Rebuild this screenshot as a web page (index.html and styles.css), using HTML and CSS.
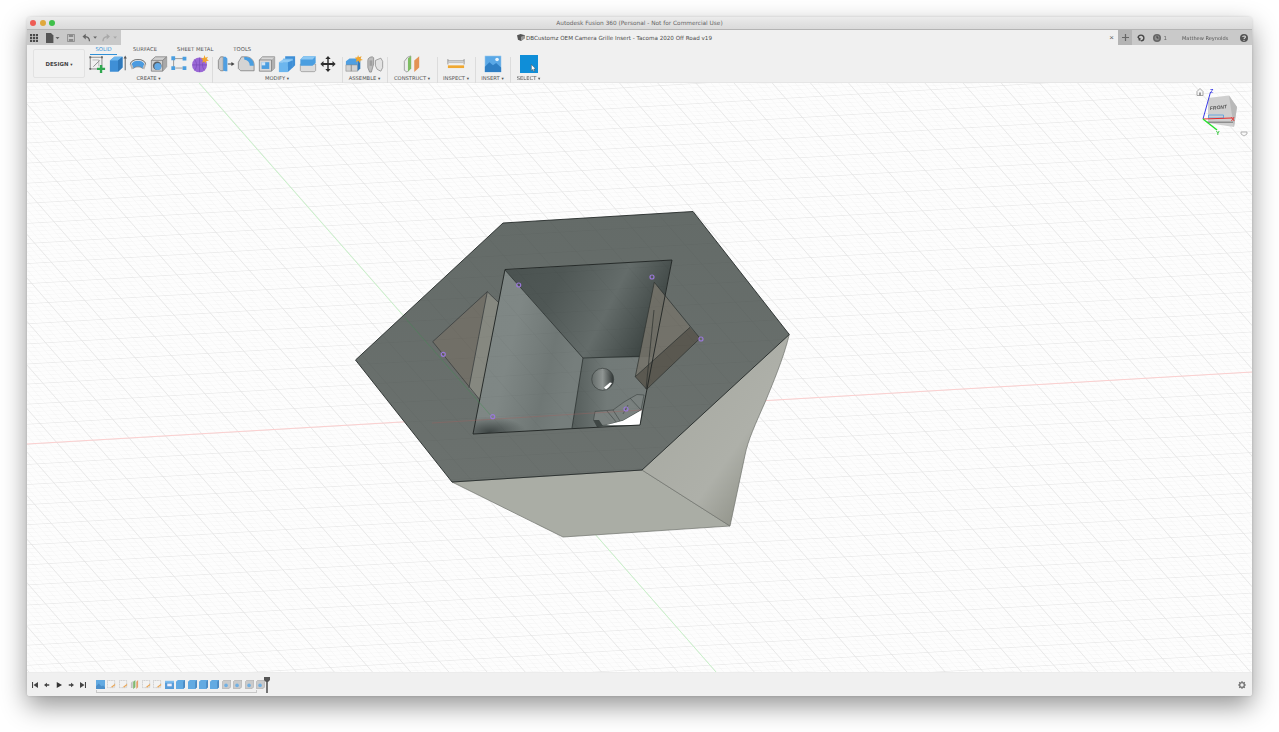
FILE: index.html
```html
<!DOCTYPE html>
<html lang="en">
<head>
<meta charset="utf-8">
<title>Autodesk Fusion 360</title>
<link rel="stylesheet" href="styles.css">
</head>
<body>
<main class="window">
  <header class="titlebar">
    <div class="lights"><i class="light red"></i><i class="light yellow"></i><i class="light green"></i></div>
    <div class="title">Autodesk Fusion 360 (Personal - Not for Commercial Use)</div>
  </header>
  <div class="tabbar">
    <div class="appbar">
      <svg class="ico grid9" viewBox="0 0 9 9"><path fill="#4a4a4a" d="M0 0h2.4v2.4H0zM3.3 0h2.4v2.4H3.3zM6.6 0H9v2.4H6.6zM0 3.3h2.4v2.4H0zM3.3 3.3h2.4v2.4H3.3zM6.6 3.3H9v2.4H6.6zM0 6.6h2.4V9H0zM3.3 6.6h2.4V9H3.3zM6.6 6.6H9V9H6.6z"/></svg>
      <svg class="ico file" viewBox="0 0 14 10"><path fill="#555" d="M0 0h5l2.4 2.4V10H0z"/><path fill="#666" d="M9.5 4h4l-2 2.2z"/></svg>
      <svg class="ico save" viewBox="0 0 9 9"><path fill="none" stroke="#8a8a8a" d="M.5.5h8v8h-8z"/><path fill="#8a8a8a" d="M2 .5h5v3H2zM2 5.5h5v3H2z"/></svg>
      <svg class="ico undo" viewBox="0 0 16 9"><path fill="none" stroke="#666" stroke-width="1.4" d="M8 8.4C8 5 6 3.5 2.5 3.5"/><path fill="#666" d="M4 .5v6L.5 3.5zM12 3.5h4l-2 2.2z"/></svg>
      <svg class="ico redo" viewBox="0 0 16 9"><path fill="none" stroke="#a8a8a8" stroke-width="1.4" d="M1 8.4C1 5 3 3.5 6.500 3.500"/><path fill="#a8a8a8" d="M5 .5v6l3.500-3zM12 3.500h4l-2 2.200z"/></svg>
    </div>
    <div class="doctab">
      <div class="doctitle">
        <svg class="cubeicon" viewBox="0 0 9 8"><path fill="#555" d="M0 1.500 4 0l5 1.500v3L4.500 8 1 6.500z"/><path fill="#999" d="M4.500 3v5l4.500-3.500v-3z"/></svg>
        <span>DBCustomz OEM Camera Grille Insert - Tacoma 2020 Off Road v19</span>
      </div>
      <span class="tabclose">×</span>
    </div>
    <div class="plus"><svg viewBox="0 0 8 8"><path fill="#666" d="M3.300 0h1.400v3.300H8v1.400H4.700V8H3.300V4.700H0V3.300h3.300z"/></svg></div>
    <div class="account">
      <svg class="ico sync" viewBox="0 0 10 10"><circle cx="5" cy="5" r="3.600" fill="none" stroke="#444" stroke-width="1.700"/><path fill="#c8c8c8" d="M0 5h3l2 5H0z"/><path fill="#444" d="M1 3.500 5 6 2.500 9z"/></svg>
      <svg class="ico clock" viewBox="0 0 10 10"><circle cx="5" cy="5" r="5" fill="#666"/><circle cx="5" cy="5" r="3" fill="#8d8d8d"/><path stroke="#333" fill="none" d="M5 2.500V5h2"/></svg>
      <span class="jobs">1</span>
      <span class="user">Matthew Reynolds</span>
      <svg class="ico help" viewBox="0 0 10 10"><circle cx="5" cy="5" r="5" fill="#555"/><path fill="none" stroke="#ddd" stroke-width="1.300" d="M3.300 3.800C3.400 2 6.800 2 6.800 3.800 6.800 5 5 5 5 6.400"/><circle cx="5" cy="7.900" r=".8" fill="#ddd"/></svg>
    </div>
  </div>
  <section class="toolbar">
    <button class="design">DESIGN <b class="caret">▾</b></button>
    <div class="toolarea">
      <nav class="tabs">
        <span class="tab active">SOLID</span>
        <span class="tab surface">SURFACE</span>
        <span class="tab sheet">SHEET METAL</span>
        <span class="tab tools">TOOLS</span>
      </nav>
      <div class="groups">
        <div class="group g-create">
          <div class="icons">
            <svg class="tool" viewBox="0 0 20 20"><path fill="none" stroke="#777" stroke-width=".9" d="M2.500 2.500h13v13h-13zM6 13 13 6"/><path fill="none" stroke="#999" stroke-width=".7" d="M5 5.500h7v7"/><path fill="#666" d="M1.500 1.500h2v2h-2zM14.500 1.500h2v2h-2zM1.500 14.500h2v2h-2z"/><path fill="#2fa84f" d="M13.200 11h2.600v3.200H19v2.600h-3.200V20h-2.600v-3.200H10v-2.600h3.200z"/></svg>
            <svg class="tool" viewBox="0 0 20 20"><path fill="#3f8fd6" d="M1 6 6 2h9v12l-5 4.500H1z"/><path fill="#6cb6ee" d="M1 6 6 2h9l-5 4z"/><path fill="#2f78ba" d="M10 6l5-4v12l-5 4.500z"/><path stroke="#555" fill="none" d="M18 17V3"/><path fill="#555" d="M18 .5l1.800 3.500h-3.600z"/></svg>
            <svg class="tool" viewBox="0 0 20 20"><path fill="#4b9be0" d="M3 10C4 5 16 5 17 10l-2 5c-2-3-8-3-10 0z"/><path fill="none" stroke="#777" stroke-width="1.200" d="M1.500 11C1 3 19 3 18.500 11"/><path fill="#b5b5b5" d="M1 10.500 3 10l2 5-2 1zM19 10.500 17 10l-2 5 2 1z"/><path fill="none" stroke="#6a6a6a" stroke-width=".8" d="M5 15c2-2.500 8-2.500 10 0"/></svg>
            <svg class="tool" viewBox="0 0 20 20"><path fill="#d0d0d0" stroke="#777" stroke-width=".8" d="M1.500 6 6 2h12.500v11l-4.500 5H1.500z"/><path fill="#a9a9a9" d="M14 6l4.500-4v11L14 18z"/><path fill="none" stroke="#777" stroke-width=".8" d="M1.500 6H14v12M14 6l4.500-4"/><circle cx="8" cy="12" r="4.800" fill="#5b6167"/><circle cx="8.700" cy="12.700" r="3.900" fill="#62a9e5"/></svg>
            <svg class="tool" viewBox="0 0 20 20"><path fill="none" stroke="#8a8a8a" stroke-width=".9" d="M4 4h12M4 4v11"/><path fill="#4a9ee0" d="M1.500 1.500h4.200v4.200H1.500zM14 2h4.200v4.200H14zM1.500 12.500h4.200v4.200H1.500zM14 12.500h4.200v4.200H14z"/><path fill="none" stroke="#8a8a8a" stroke-width=".9" d="M6 14.500h8"/></svg>
            <svg class="tool" viewBox="0 0 20 20"><circle cx="9.500" cy="11" r="8.300" fill="#9a68d6"/><path fill="none" stroke="#7b4cb8" stroke-width=".8" d="M9.500 3v16M1.500 11h16M4 5c3 4 3 8 0 12M15 5c-3 4-3 8 0 12"/><path fill="#f2a52c" d="M15 0l1 3 3-1-1.500 2.500L20 6.500l-3 .3-.5 3-1.500-2.500-2.500 1.300.8-3L11 4l3-.6z"/></svg>
          </div>
          <div class="glabel">CREATE <b class="caret">▾</b></div>
        </div>
        <div class="group g-modify">
          <div class="icons">
            <svg class="tool" viewBox="0 0 20 20"><path fill="#c9c9c9" stroke="#777" stroke-width=".8" d="M1.500 6 4 2h3v15.500H4L1.500 15z"/><path fill="#4f9fe2" d="M7 2h2.500l2 2v14h-2L7 17.500z"/><path stroke="#444" stroke-width="1.100" d="M12 10h5"/><path fill="#444" d="M19.500 10 16 7.800v4.400z"/></svg>
            <svg class="tool" viewBox="0 0 20 20"><path fill="#d4d4d4" stroke="#777" stroke-width=".8" d="M1.500 8 5 2h5c5 0 9 4 9 9v6.500H4L1.500 15z"/><path fill="#4a9ee0" d="M8 2.300h2c5 0 8.700 4 8.700 8.700v1h-4.500C14 8 12 5.500 8 5z"/></svg>
            <svg class="tool" viewBox="0 0 20 20"><path fill="#d8d8d8" stroke="#777" stroke-width=".8" d="M1.500 5.500 5 2h13.500v12.500L15 18H1.500z"/><path fill="#b0b0b0" d="M15 5.500 18.500 2v12.500L15 18z"/><path fill="none" stroke="#777" stroke-width=".8" d="M1.500 5.500H15V18"/><path fill="#4a9ee0" d="M4 8h8.500v7.500H4z"/><path fill="#cfe5f7" d="M4 8h4v3.500H4z"/></svg>
            <svg class="tool" viewBox="0 0 20 20"><path fill="#3f8fd6" d="M8 1.500h11v10l-3 3V5H8z"/><path fill="#6cb6ee" d="M5.500 4h11v9h-11z"/><path fill="#6cb6ee" d="M1 8h10v11H1z"/><path fill="#3f8fd6" d="M11 8l5.500-2v8L11 19z"/><path fill="#93cbf4" d="M1 8l4.500-3h11L11 8z"/></svg>
            <svg class="tool" viewBox="0 0 20 20"><path fill="#dcdcdc" stroke="#888" stroke-width=".7" d="M1.500 10h17v7c0 1-1 1.500-2 1.500H3.500c-1 0-2-.5-2-1.500z"/><path fill="#4a9ee0" d="M1.500 5 5 1.500h13.500V9L15 12H1.500z"/><path fill="#8cc8f3" d="M1.500 5 5 1.500h13.500L15 5z"/></svg>
            <svg class="tool" viewBox="0 0 20 20"><path fill="#2e2e2e" d="M10 1l3 3.500h-2.200V9H15V6.800l3.500 3.200-3.500 3.200V11h-4.200v4.500H13L10 19l-3-3.500h2.200V11H5v2.200L1.500 10 5 6.800V9h4.200V4.500H7z"/></svg>
          </div>
          <div class="glabel">MODIFY <b class="caret">▾</b></div>
        </div>
        <div class="group g-assemble">
          <div class="icons">
            <svg class="tool" viewBox="0 0 20 20"><path fill="#4f9fe2" d="M1 7l4-3h9v7H1z"/><path fill="#d2d2d2" stroke="#888" stroke-width=".6" d="M1 11h6v7H1zM7 11h7v7H7z"/><path fill="#2f78ba" d="M14 4l3-2v13l-3 3z"/><path fill="#f2a52c" d="M14.500 0l1 2.500 3-1-1.300 2.700 2.800 1.300-3 .5-.5 3-1.800-2.500-2.700 1.200 1-2.800L11 3l2.800-.5z"/></svg>
            <svg class="tool" viewBox="0 0 20 20"><path fill="#bdbdbd" stroke="#777" stroke-width=".7" d="M2 14V6c0-2.500 2.500-4 5-4l1.500 1v7L6 19H4z"/><path fill="#e3e3e3" stroke="#777" stroke-width=".7" d="M10.500 6l6-2.500L18.500 7v7l-2 4-4-2-2-4z"/><path fill="#9e9e9e" d="M4 6h3v6H4z"/></svg>
          </div>
          <div class="glabel">ASSEMBLE <b class="caret">▾</b></div>
        </div>
        <div class="group g-construct">
          <div class="icons">
            <svg class="tool" viewBox="0 0 20 20"><path fill="#ececec" stroke="#888" stroke-width=".8" d="M1.500 7 5 2.500l3.500-1.500v14L4.500 19l-3-2z"/><path fill="#7ebd63" d="M5.500 3.500 9 1v14l-3.500 3.500z"/><path fill="#e39356" d="M12.500 6 18 1.500v12.500L12.500 19z"/></svg>
          </div>
          <div class="glabel">CONSTRUCT <b class="caret">▾</b></div>
        </div>
        <div class="group g-inspect">
          <div class="icons">
            <svg class="tool" viewBox="0 0 20 20"><path fill="none" stroke="#888" stroke-width=".9" d="M1 6.500h18M1 4.500v6M19 4.500v6"/><path fill="#c4c4c4" d="M1 7.500h18v1.500H1z"/><path fill="#f0a830" d="M1 11.500h18v3H1z"/></svg>
          </div>
          <div class="glabel">INSPECT <b class="caret">▾</b></div>
        </div>
        <div class="group g-insert">
          <div class="icons">
            <svg class="tool" viewBox="0 0 20 20"><path fill="#5aa8e6" stroke="#bcd9f0" stroke-width=".5" d="M1 1h18v18H1z"/><path fill="#2f7fc4" d="M1 19v-6l5-5 4 3.500 3.500-2.500L19 14v5z"/><circle cx="14.500" cy="5" r="2" fill="#e8f3fb"/></svg>
          </div>
          <div class="glabel">INSERT <b class="caret">▾</b></div>
        </div>
        <div class="group g-select">
          <div class="icons">
            <svg class="tool" viewBox="0 .5 19 19"><path fill="#0f8ed8" d="M0 .5h19v19H0z"/><path fill="#fff" stroke="#444" stroke-width=".5" d="M12 10.500v6.500l1.500-1.300 1 2.300 1-.5-1-2.200 2-.2z"/></svg>
          </div>
          <div class="glabel">SELECT <b class="caret">▾</b></div>
        </div>
      </div>
    </div>
  </section>
  <section class="canvas">
    <svg class="scene" viewBox="27 83 1225 589">
      <defs>
        <pattern id="minor" patternUnits="userSpaceOnUse" width="20" height="20" patternTransform="matrix(.363 -.0214 .1675 .191 491.6 416.6)">
          <path fill="none" stroke="#f1f1f1" stroke-width="2.600" d="M0 0V20M0 0H20"/>
        </pattern>
        <pattern id="major" patternUnits="userSpaceOnUse" width="100" height="100" patternTransform="matrix(.363 -.0214 .1675 .191 491.6 416.6)">
          <path fill="none" stroke="#e1e1e1" stroke-width="3.400" d="M0 0V100M0 0H100"/>
        </pattern>
        <pattern id="overlay" patternUnits="userSpaceOnUse" width="100" height="100" patternTransform="matrix(.363 -.0214 .1675 .191 491.6 416.6)">
          <path fill="none" stroke="#000" stroke-opacity=".05" stroke-width="3" d="M0 0V100M0 0H100"/>
        </pattern>
        <linearGradient id="gTop" x1="0" y1="0" x2="0" y2="1"><stop offset="0" stop-color="#646b68"/><stop offset="1" stop-color="#6b716e"/></linearGradient>
        <linearGradient id="gLeftWall" x1="0" y1="0" x2="1" y2=".35"><stop offset="0" stop-color="#7e8684"/><stop offset=".45" stop-color="#7f8785"/><stop offset=".8" stop-color="#6f7775"/><stop offset="1" stop-color="#767e7c"/></linearGradient>
        <linearGradient id="gTopWall" x1="0" y1="0" x2="1" y2=".3"><stop offset="0" stop-color="#4a5250"/><stop offset=".35" stop-color="#4f5755"/><stop offset=".7" stop-color="#646c6a"/><stop offset="1" stop-color="#3f4745"/></linearGradient>
        <linearGradient id="gFloor" x1="0" y1="0" x2="1" y2="0"><stop offset="0" stop-color="#555d5b"/><stop offset=".4" stop-color="#727a78"/><stop offset="1" stop-color="#747b79"/></linearGradient>
        <linearGradient id="gRight" x1=".1" y1=".2" x2=".9" y2=".95"><stop offset="0" stop-color="#a7a9a1"/><stop offset=".6" stop-color="#aeb0a9"/><stop offset=".82" stop-color="#96988f"/><stop offset="1" stop-color="#595b56"/></linearGradient>
        <linearGradient id="gHole" x1="0" y1="0" x2="1" y2="0"><stop offset="0" stop-color="#646b69"/><stop offset=".5" stop-color="#8f9593"/><stop offset="1" stop-color="#2f3534"/></linearGradient>
        <radialGradient id="gShade"><stop offset="0" stop-color="#3b4241" stop-opacity=".95"/><stop offset="1" stop-color="#3b4241" stop-opacity="0"/></radialGradient>
        <clipPath id="holeClip"><path d="M505 270 672 260 640 425 473 434z"/></clipPath>
        <clipPath id="leftWallClip"><path d="M505 270 583 358 572 428 473 434z"/></clipPath>
      </defs>
      <rect x="27" y="83" width="1225" height="589" fill="#fdfdfd"/>
      <rect x="27" y="83" width="1225" height="589" fill="url(#minor)"/>
      <rect x="27" y="83" width="1225" height="589" fill="url(#major)"/>
      <path class="axis-green" d="M199 83 716 672"/>
      <path class="axis-red" d="M27 444 1252 372"/>

      <path fill="#aaada5" stroke="#6f716c" stroke-width=".7" d="M452 482 642 470 730 526 563 537z"/>
      <path fill="url(#gRight)" stroke="#6f716c" stroke-width=".7" d="M642 470 789.300 334.500C783 360 772 385 766 400 755 425 748 440 745 455L730 526z"/>
      <path fill="url(#gTop)" d="M503 223 693 211.500 789.300 334.500 642 470 452 482 355.500 360z"/>

      <g clip-path="url(#holeClip)">
        <path fill="url(#gFloor)" d="M583 358 660 355 640 426 572 429z"/>
        <path fill="url(#gTopWall)" d="M505 270 672 260 652 357 583 358z"/>
        <path fill="url(#gLeftWall)" d="M505 270 583 358 572 428 473 434z"/>
        <g clip-path="url(#leftWallClip)"><ellipse cx="490" cy="432" rx="36" ry="15" fill="url(#gShade)"/></g>
        <path fill="none" stroke="#2c3231" stroke-width=".8" d="M505 270 583 358 572 428M583 358 648 356"/>
        <circle cx="602.700" cy="379.300" r="11" fill="url(#gHole)" stroke="#3b413f" stroke-width=".7"/>
        <path fill="#fff" d="M604 387.500 610 382.500 612 383 609 387 606 389.500z"/>
        <path fill="#7a817f" stroke="#3c4341" stroke-width=".6" d="M595 411.500 613 410 624 402 637 394.500 644 395 641 410 623 420.500 607 425 597 426 593.500 420z"/>
        <path fill="none" stroke="#3c4341" stroke-width=".6" d="M613 410 620 421M630 398 641 410M607 411 617 423M628 405 623 414"/>
        <path fill="#fff" d="M606.500 425 623 420.700 641.700 410 640 425z"/>
        <path fill="#3f4644" d="M593.500 420 597 427 603 426 599 420z"/>
      </g>

      <path fill="#75736a" fill-opacity=".88" d="M654.300 282.300 690 327.300 635.300 376.700z"/>
      <path fill="#59564e" fill-opacity=".92" d="M690 327.300 700 338.300 646.700 389.300 635.300 376.700z"/>
      <path fill="none" stroke="#2c302e" stroke-width=".7" d="M654.300 282.300 700 338.300 646.700 389.300 635.300 376.700zM690 327.300 635.300 376.700M654 310 646 389"/>
      <path fill="#716f67" d="M487.300 291.700 432.700 341.700 469 387.700z"/>
      <path fill="#868880" d="M487.300 291.700 498.300 302.300 480 400 469 387.700z"/>
      <path fill="none" stroke="#33383a" stroke-width=".7" d="M498.300 302.300 487.300 291.700 432.700 341.700 480 400M487.300 291.700 469 387.700"/>
      <path fill="url(#overlay)" d="M503 223 693 211.500 789.300 334.500 642 470 452 482 355.500 360z"/>
      <path fill="none" stroke="#1f2423" stroke-width=".9" d="M505 269.500 672 260 640 425 473 434z"/>
      <path fill="none" stroke="#262b2a" stroke-width=".9" d="M503 223 693 211.500 789.300 334.500 642 470 452 482 355.500 360z"/>
      <path class="axis-red-in" d="M432 423 642 410"/>
      <path class="axis-green-in" d="M405 318 492 417"/>

      <g class="dots">
        <circle cx="518.700" cy="285" r="2"/>
        <circle cx="652" cy="277" r="2"/>
        <circle cx="701" cy="339" r="2"/>
        <circle cx="626" cy="409" r="2"/>
        <circle cx="492.700" cy="416.700" r="2"/>
        <circle cx="443.300" cy="354.300" r="2"/>
      </g>
    </svg>
    <svg class="viewcube" viewBox="0 0 50 52">
      <path fill="#f6f6f6" stroke="#888" stroke-width=".7" d="M0 6.500 3 3.500l3 3v4H0z"/>
      <path fill="#777" d="M2.300 7.500h1.400v3H2.300z"/>
      <path fill="#cfcfcf" d="M11 13 32 10.500 40 22 37 42 11 38z"/>
      <path fill="#b9b9b9" d="M32 10.500 40 22 37 42 34 24z"/>
      <path fill="none" stroke="#6aa6dd" d="M11.500 30h15v3h-15z"/>
      <path fill="#8e8e8e" d="M10 36.500h26v1.500H10z"/>
      <text x="13" y="25" class="front" transform="rotate(-6 13 25)">FRONT</text>
      <path stroke="#3a3ae6" stroke-width="1" d="M6 34 13.500 7"/>
      <path stroke="#e62a2a" stroke-width="1.200" d="M6 34 35 33"/>
      <path stroke="#22e02a" stroke-width="1.400" d="M6 34 20 45"/>
      <text x="13" y="8" class="ax z">Z</text>
      <text x="34" y="36" class="ax x">X</text>
      <text x="19" y="50" class="ax y">Y</text>
      <path fill="#f8f8f8" stroke="#999" stroke-width=".7" d="M44 47h6v2l-3 2-3-2z"/>
    </svg>
  </section>
  <footer class="timeline">
    <div class="playback">
      <svg class="pb" viewBox="0 0 8 8"><path fill="#444" d="M0 0h1.400v8H0zM8 0v8L2 4z"/></svg>
      <svg class="pb" viewBox="0 0 8 8"><path fill="#444" d="M0 4l4-3v2h3v2H4v2z"/></svg>
      <svg class="pb" viewBox="0 0 8 8"><path fill="#333" d="M1 0v8l7-4z"/></svg>
      <svg class="pb" viewBox="0 0 8 8"><path fill="#444" d="M8 4 4 1v2H1v2h3v2z"/></svg>
      <svg class="pb" viewBox="0 0 8 8"><path fill="#444" d="M8 0H6.600v8H8zM0 0v8l6-4z"/></svg>
    </div>
    <div class="steps">
      <div class="stepicons">
        <svg class="st" viewBox="0 0 10 10"><path fill="#4a9ee0" d="M0 0h10v10H0z"/><path fill="#2f7fc4" d="M0 10V7l3-3 3 3 2-1 2 2v2z"/></svg>
        <svg class="st" viewBox="0 0 10 10"><path fill="#f3f3f3" stroke="#aaa" stroke-width=".7" stroke-dasharray="1.200 .6" d="M.5.5h8v8h-8z"/><path stroke="#e89a3c" stroke-width="1.300" d="M5 8l4-3"/></svg>
        <svg class="st" viewBox="0 0 10 10"><path fill="#f3f3f3" stroke="#aaa" stroke-width=".7" stroke-dasharray="1.200 .6" d="M.5.5h8v8h-8z"/><path stroke="#e89a3c" stroke-width="1.300" d="M5 8l4-3"/></svg>
        <svg class="st" viewBox="0 0 10 10"><path fill="#bbb" d="M1 3l2-2v8L1 9z"/><path fill="#6db05a" d="M3.500 2 6 0v8L3.500 10z"/><path fill="#e39356" d="M7 2l2-2v8L7 10z"/></svg>
        <svg class="st" viewBox="0 0 10 10"><path fill="#f3f3f3" stroke="#aaa" stroke-width=".7" stroke-dasharray="1.200 .6" d="M.5.5h8v8h-8z"/><path stroke="#e89a3c" stroke-width="1.300" d="M5 8l4-3"/></svg>
        <svg class="st" viewBox="0 0 10 10"><path fill="#f3f3f3" stroke="#aaa" stroke-width=".7" stroke-dasharray="1.200 .6" d="M.5.5h8v8h-8z"/><path stroke="#e89a3c" stroke-width="1.300" d="M5 8l4-3"/></svg>
        <svg class="st" viewBox="0 0 10 10"><path fill="#3f8fd6" d="M0 1h10v9H0z"/><path fill="#eef" d="M2.500 4h5v3h-5z"/><path fill="#6cb6ee" d="M0 1h10v2H0z"/></svg>
        <svg class="st" viewBox="0 0 10 10"><path fill="#4a9ee0" d="M0 2l2-2h8v8l-2 2H0z"/><path fill="#2f78ba" d="M8 2l2-2v8l-2 2z"/></svg>
        <svg class="st" viewBox="0 0 10 10"><path fill="#4a9ee0" d="M0 2l2-2h8v8l-2 2H0z"/><path fill="#2f78ba" d="M8 2l2-2v8l-2 2z"/></svg>
        <svg class="st" viewBox="0 0 10 10"><path fill="#4a9ee0" d="M0 2l2-2h8v8l-2 2H0z"/><path fill="#2f78ba" d="M8 2l2-2v8l-2 2z"/></svg>
        <svg class="st" viewBox="0 0 10 10"><path fill="#4a9ee0" d="M0 2l2-2h8v8l-2 2H0z"/><path fill="#2f78ba" d="M8 2l2-2v8l-2 2z"/></svg>
        <svg class="st" viewBox="0 0 10 10"><path fill="#c4c4c4" stroke="#888" stroke-width=".5" d="M.3 2l2-2h7.400v7.700l-2 2H.3z"/><circle cx="4.500" cy="6" r="2" fill="#5aa5e2"/></svg>
        <svg class="st" viewBox="0 0 10 10"><path fill="#c4c4c4" stroke="#888" stroke-width=".5" d="M.3 2l2-2h7.400v7.700l-2 2H.3z"/><circle cx="4.500" cy="6" r="2" fill="#5aa5e2"/></svg>
        <svg class="st" viewBox="0 0 10 10"><path fill="#c4c4c4" stroke="#888" stroke-width=".5" d="M.3 2l2-2h7.400v7.700l-2 2H.3z"/><circle cx="4.500" cy="6" r="2" fill="#5aa5e2"/></svg>
        <svg class="st" viewBox="0 0 10 10"><path fill="#c4c4c4" stroke="#888" stroke-width=".5" d="M.3 2l2-2h7.400v7.700l-2 2H.3z"/><circle cx="4.500" cy="6" r="2" fill="#5aa5e2"/></svg>
      </div>
      <div class="bracket"></div>
      <svg class="marker" viewBox="0 0 6 16"><path fill="#555" d="M0 0h6v3L4 5H3.800v11H2.200V5H2L0 3z"/></svg>
    </div>
    <svg class="gear" viewBox="0 0 10 10"><circle cx="5" cy="5" r="3" fill="none" stroke="#777" stroke-width="1.800"/><path stroke="#777" stroke-width="1.400" d="M5 0v2M5 8v2M0 5h2M8 5h2M1.500 1.500l1.400 1.400M7.100 7.100l1.400 1.400M1.500 8.500l1.400-1.400M7.100 2.900l1.400-1.400"/></svg>
  </footer>
</main>
</body>
</html>
```
FILE: styles.css
```css
* { box-sizing: border-box; }
html, body { margin: 0; height: 100%; }
body {
  background: #fff;
  padding: 17px 27px 0;
  font-family: "DejaVu Sans", "Liberation Sans", sans-serif;
  color: #555;
  overflow: hidden;
}
.window {
  width: 1225px;
  height: 679px;
  display: flex;
  flex-direction: column;
  border-radius: 4px 4px 3px 3px;
  overflow: hidden;
  box-shadow: 0 10px 26px rgba(0,0,0,.42), 0 0 3px rgba(0,0,0,.15);
  background: #f0f0f0;
  filter: blur(.3px);
}
.titlebar {
  height: 13px;
  flex: none;
  position: relative;
  background: linear-gradient(#ebebeb, #dadada);
  border-bottom: 1px solid #b4b4b4;
  display: flex;
  align-items: center;
  justify-content: center;
}
.lights { position: absolute; left: 3px; top: 3px; display: flex; gap: 3.600px; }
.light { width: 6px; height: 6px; border-radius: 50%; display: block; }
.red { background: #ee5c54; }
.yellow { background: #e0a83c; }
.green { background: #3fc04a; }
.title { font-size: 5.800px; color: #666; }

.tabbar { height: 15px; flex: none; display: flex; background: #c9c9c9; }
.appbar { width: 94px; flex: none; display: flex; align-items: center; padding-left: 3px; }
.ico { display: block; flex: none; }
.grid9 { width: 8px; height: 8px; }
.file { width: 14px; height: 10px; margin-left: 8px; }
.save { width: 8px; height: 8px; margin-left: 7px; }
.undo { width: 15px; height: 9px; margin-left: 7px; }
.redo { width: 15px; height: 9px; margin-left: 5px; }
.doctab {
  flex: 1;
  background: #f0f0f0;
  display: flex;
  align-items: center;
  position: relative;
}
.doctitle {
  position: absolute;
  left: 396px;
  display: flex;
  align-items: center;
  gap: 1px;
  font-size: 5.600px;
  color: #4a4a4a;
  white-space: nowrap;
}
.cubeicon { width: 8px; height: 7px; }
.tabclose { margin-left: auto; margin-right: 4px; font-size: 8px; color: #666; line-height: 1; font-family: "Liberation Sans", sans-serif; }
.plus { width: 14px; flex: none; background: #b4b4b4; display: flex; align-items: center; justify-content: center; }
.plus svg { width: 7px; height: 7px; }
.account { width: 120px; flex: none; display: flex; align-items: center; padding-left: 5px; }
.sync { width: 8px; height: 8px; }
.clock { width: 8px; height: 8px; margin-left: 8px; }
.jobs { font-size: 5.500px; margin-left: 2.500px; color: #666; }
.user { font-size: 5.050px; margin-left: 15px; color: #555; white-space: nowrap; }
.help { width: 8px; height: 8px; margin-left: 12px; }

.toolbar {
  height: 38px;
  flex: none;
  display: flex;
  background: #f0f0f0;
  border-bottom: 1px solid #e6e6e6;
}
.design {
  width: 52px;
  height: 29px;
  margin: 4px 3px 0 6px;
  padding: 0;
  background: #f1f1f1;
  border: 1px solid #e2e2e2;
  border-radius: 2px;
  font: 5.400px "DejaVu Sans", sans-serif;
  font-weight: 600;
  color: #444;
}
.caret { font-size: 4.500px; font-weight: 400; }
.toolarea { flex: 1; display: flex; flex-direction: column; }
.tabs { height: 10px; display: flex; align-items: flex-start; padding-left: 2px; }
.tab { font-size: 5.300px; color: #555; white-space: nowrap; line-height: 9px; }
.active { color: #3b96d8; width: 27px; text-align: center; border-bottom: 1px solid #2f8fd6; height: 9.500px; }
.surface { margin-left: 16px; }
.sheet { margin-left: 20px; }
.tools { margin-left: 20px; }
.groups { display: flex; height: 28px; }
.group {
  display: flex;
  flex-direction: column;
  align-items: center;
  border-right: 1px solid #dcdcdc;
  height: 26px;
  margin-top: 2px;
}
.g-select { border-right: none; }
.g-create { width: 124.500px; padding-right: 2.500px; }
.g-modify { width: 130px; }
.g-assemble { width: 45px; }
.g-construct { width: 50px; }
.g-inspect { width: 38px; }
.g-insert { width: 35px; }
.g-select { width: 36px; }
.icons { display: flex; gap: 2.500px; height: 18px; margin-top: -2px; align-items: center; }
.tool { width: 18px; height: 18px; display: block; flex: none; }
.glabel { font-size: 5.200px; color: #4f4f4f; white-space: nowrap; margin-top: 2.500px; line-height: 7px; }

.canvas { height: 589px; flex: none; position: relative; }
.scene { display: block; width: 1225px; height: 589px; }
.axis-green { stroke: #c9f2c9; stroke-width: 1; fill: none; }
.axis-red { stroke: #fbcfcf; stroke-width: 1; fill: none; }
.axis-red-in { stroke: #a8605c; stroke-width: .6; stroke-opacity: .6; fill: none; }
.axis-green-in { stroke: #3f9a52; stroke-width: .6; stroke-opacity: .6; fill: none; }
.dots circle { fill: none; stroke: #9a78d8; stroke-width: 1.200; }
.viewcube { position: absolute; left: 1170px; top: 2px; width: 50px; height: 52px; overflow: visible; }
.front { font: italic 700 5px "Liberation Sans", sans-serif; fill: #555; }
.ax { font: 700 5.500px "Liberation Sans", sans-serif; }
.z { fill: #3a3ae6; }
.x { fill: #e62a2a; }
.y { fill: #22c02a; }

.timeline {
  flex: 1;
  display: flex;
  align-items: center;
  padding: 0 6px 0 5px;
  background: #f0f0f0;
  border-top: 1px solid #ececec;
}
.playback { display: flex; gap: 6px; width: 64px; flex: none; }
.pb { width: 6px; height: 6px; display: block; flex: none; }
.steps { position: relative; width: 175px; height: 20px; flex: none; }
.stepicons { display: flex; gap: 2.440px; padding-top: 5px; }
.st { width: 9px; height: 9px; display: block; flex: none; opacity: .85; }
.bracket {
  position: absolute;
  left: 0;
  top: 15px;
  width: 161px;
  height: 3px;
  border: 1px solid #c8c8c8;
  border-top: none;
}
.marker { position: absolute; left: 168px; top: 2px; width: 6px; height: 16px; }
.gear { width: 8px; height: 8px; margin-left: auto; display: block; }
```
